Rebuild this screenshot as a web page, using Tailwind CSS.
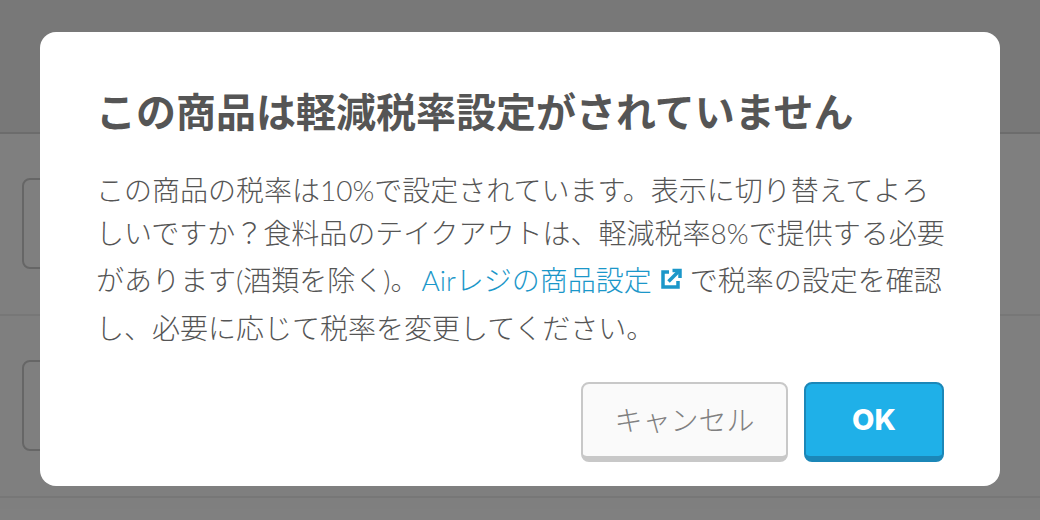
<!DOCTYPE html>
<html lang="ja">
<head>
  <meta charset="UTF-8" />
  <meta name="viewport" content="width=device-width, initial-scale=1.0" />
  <title>軽減税率設定</title>
  <script src="https://cdn.jsdelivr.net/npm/@tailwindcss/browser@4"></script>
</head>
<body class="relative w-[1040px] h-[520px] overflow-hidden bg-white font-['Lato','Noto_Sans_CJK_JP',sans-serif]">
  <!-- page behind the modal -->
  <div class="h-[134px] bg-[#f0f0f0] border-b-2 border-[#d8d8d8]"></div>
  <div class="h-[182px] pt-[44px] pl-[22px] border-b-2 border-[#eeeeee]">
    <div class="w-[200px] h-[91px] border-2 border-[#cccccc] rounded-lg"></div>
  </div>
  <div class="h-[182px] pt-[44px] pl-[22px] border-b-2 border-[#eeeeee]">
    <div class="w-[200px] h-[91px] border-2 border-[#cccccc] rounded-lg"></div>
  </div>

  <!-- overlay -->
  <div class="absolute inset-0 bg-black/50 flex items-start justify-center pt-[32px]">
    <div class="w-[960px] h-[454px] bg-white rounded-2xl pt-[54px] px-[56px]">
      <h1 class="text-[40px] leading-[52px] font-bold text-[#555555] whitespace-nowrap">この商品は軽減税率設定がされていません</h1>
      <p class="mt-[29px] text-[28px] leading-[47.500px] font-light text-[#555555] whitespace-nowrap">
        <span class="block mb-[-5px]">この商品の税率は10%で設定されています。表示に切り替えてよろ</span>
        しいですか？食料品のテイクアウトは、軽減税率8%で提供する必要<br>
        があります(酒類を除く)。<a class="ml-[3px] text-[#1b97c9]">Airレジの商品設定<svg class="inline-block w-[22px] h-[22px] mx-[8px] align-[1px]" viewBox="0 0 22 22" fill="none" stroke="#1b97c9" stroke-width="3.500"><path d="M9 4H3v15h15v-6"/><path d="M8.500 13.500 19 3"/><path d="M12.500 2.500H20V10"/></svg></a>で税率の設定を確認<br>
        し、必要に応じて税率を変更してください。
      </p>
      <div class="mt-[30px] flex justify-end gap-4">
        <button class="w-[207px] h-[80px] rounded-lg bg-[#fafafa] border-2 border-b-[6px] border-[#c8c8c8] text-[28px] font-light text-[#808080]">キャンセル</button>
        <button class="w-[140px] h-[80px] rounded-lg bg-[#1fb0e8] border-2 border-b-[6px] border-[#1b87b8] text-[29px] font-extrabold text-white font-['Inter',sans-serif]">OK</button>
      </div>
    </div>
  </div>
</body>
</html>
